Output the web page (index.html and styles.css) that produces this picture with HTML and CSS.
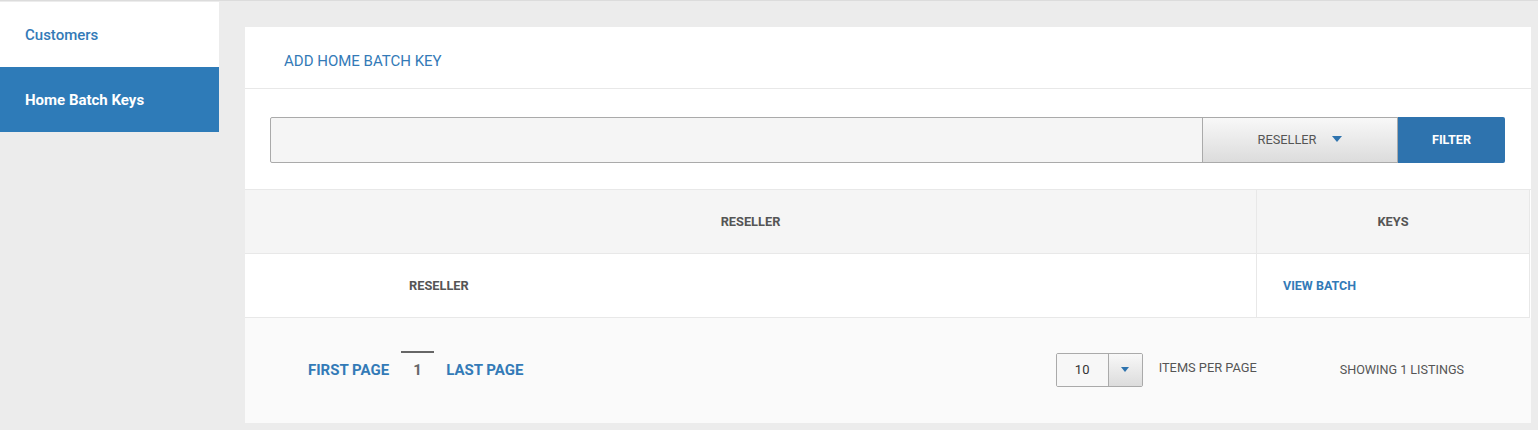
FILE: index.html
```html
<!DOCTYPE html>
<html>
<head>
<meta charset="utf-8">
<link rel="stylesheet" href="styles.css">
</head>
<body>
<div class="app">
  <nav class="sidebar">
    <a class="nav-item">Customers</a>
    <a class="nav-item active">Home Batch Keys</a>
  </nav>
  <main class="main">
    <section class="card">
      <div class="card-head"><a class="add-link">ADD HOME BATCH KEY</a></div>
      <div class="filter-row">
        <div class="search-input"></div>
        <div class="dropdown">RESELLER <span class="caret"></span></div>
        <div class="filter-btn">FILTER</div>
      </div>
      <div class="table">
        <div class="row head">
          <div class="cell c1 center">RESELLER</div>
          <div class="cell c2 center">KEYS</div>
        </div>
        <div class="row body">
          <div class="cell c1 reseller">RESELLER</div>
          <div class="cell c2"><a class="view-link">VIEW BATCH</a></div>
        </div>
      </div>
      <div class="footer">
        <div class="pager">
          <a class="page-link">FIRST PAGE</a>
          <span class="page-num">1</span>
          <a class="page-link">LAST PAGE</a>
        </div>
        <div class="per-page">
          <div class="select">
            <span class="select-val">10</span>
            <span class="select-btn"><span class="caret small"></span></span>
          </div>
          <span class="per-label">ITEMS PER PAGE</span>
          <span class="showing">SHOWING 1 LISTINGS</span>
        </div>
      </div>
    </section>
  </main>
</div>
</body>
</html>
```
FILE: styles.css
```css
* { box-sizing: border-box; }
html, body { margin: 0; padding: 0; }
body {
  background: #ececec;
  font-family: Roboto, "Liberation Sans", Arial, sans-serif;
  border-top: 1px solid #dcdcdc;
  height: 430px;
  overflow: hidden;
}
a { cursor: pointer; }
.app { display: flex; align-items: flex-start; }
.sidebar {
  width: 219px;
  flex: none;
  display: flex;
  flex-direction: column;
  padding-top: 1px;
}
.nav-item {
  display: flex;
  align-items: center;
  height: 65px;
  padding-left: 25px;
  background: #fff;
  color: #337ab7;
  font-size: 15px;
  font-weight: 500;
}
.nav-item.active {
  background: #2e7bb8;
  color: #fff;
  font-weight: 700;
  height: 65px;
}
.main {
  flex: 1;
  padding: 26px 7px 0 26px;
}
.card { background: #fff; }
.card-head {
  height: 62px;
  border-bottom: 1px solid #e8e8e8;
  display: flex;
  align-items: center;
  padding-left: 39px;
  padding-top: 7px;
}
.add-link { color: #337ab7; font-size: 15px; }
.filter-row {
  display: flex;
  height: 100px;
  padding: 28px 26px 0 25px;
}
.search-input {
  flex: 1;
  height: 46px;
  background: #f5f5f5;
  border: 1px solid #aaa;
  border-radius: 2px 0 0 2px;
}
.dropdown {
  width: 196px;
  height: 46px;
  border: 1px solid #aaa;
  margin-left: -1px;
  background: linear-gradient(#f8f8f8, #dcdcdc);
  display: flex;
  align-items: center;
  justify-content: center;
  font-size: 12.8px;
  color: #555;
  padding-bottom: 2px;
}
.dropdown .caret { margin-left: 16px; }
.caret {
  display: inline-block;
  width: 0; height: 0;
  border-left: 5px solid transparent;
  border-right: 5px solid transparent;
  border-top: 6px solid #2e73ae;
}
.caret.small {
  border-left-width: 4px;
  border-right-width: 4px;
  border-top-width: 5px;
}
.filter-btn {
  width: 107px;
  height: 46px;
  background: #2e73ae;
  color: #fff;
  font-size: 12.6px;
  font-weight: 700;
  display: flex;
  align-items: center;
  justify-content: center;
  border-radius: 0 2px 2px 0;
  padding-bottom: 2px;
}
.table { border-top: 1px solid #e8e8e8; }
.row {
  display: flex;
  height: 64px;
  border-bottom: 1px solid #e8e8e8;
  margin-right: 1px;
  border-right: 1px solid #e8e8e8;
}
.row.head { background: #f5f5f5; }
.cell {
  display: flex;
  align-items: center;
  font-size: 12.8px;
  font-weight: 700;
  color: #555;
}
.c1 { width: 1012px; flex: none; border-right: 1px solid #e8e8e8; }
.c2 { flex: 1; padding-left: 26px; }
.cell.center { justify-content: center; padding-left: 0; }
.reseller { padding-left: 164px; }
.view-link { color: #337ab7; font-size: 12.5px; }
.footer {
  height: 105px;
  background: #fafafa;
  display: flex;
  align-items: center;
  padding: 0 67px 2px 63px;
}
.pager { display: flex; align-items: center; }
.page-link {
  color: #337ab7;
  font-size: 15px;
  font-weight: 700;
}
.page-num {
  width: 33px;
  margin: -10px 12px 0 12px;
  text-align: center;
  font-size: 15px;
  font-weight: 700;
  color: #666;
  border-top: 2px solid #666;
  padding-top: 8px;
}
.per-page {
  margin-left: auto;
  display: flex;
  align-items: center;
}
.select {
  display: flex;
  width: 87px;
  height: 34px;
  border: 1px solid #aaa;
  border-radius: 2px;
  overflow: hidden;
}
.select-val {
  width: 52px;
  background: #f7f7f7;
  display: flex;
  align-items: center;
  justify-content: center;
  font-size: 13px;
  color: #333;
  border-right: 1px solid #aaa;
}
.select-btn {
  flex: 1;
  background: linear-gradient(#f8f8f8, #dcdcdc);
  display: flex;
  align-items: center;
  justify-content: center;
}
.per-label {
  margin-left: 16px;
  margin-top: -4px;
  font-size: 12.8px;
  color: #555;
}
.showing {
  margin-left: 83px;
  font-size: 12.6px;
  color: #555;
}
```
